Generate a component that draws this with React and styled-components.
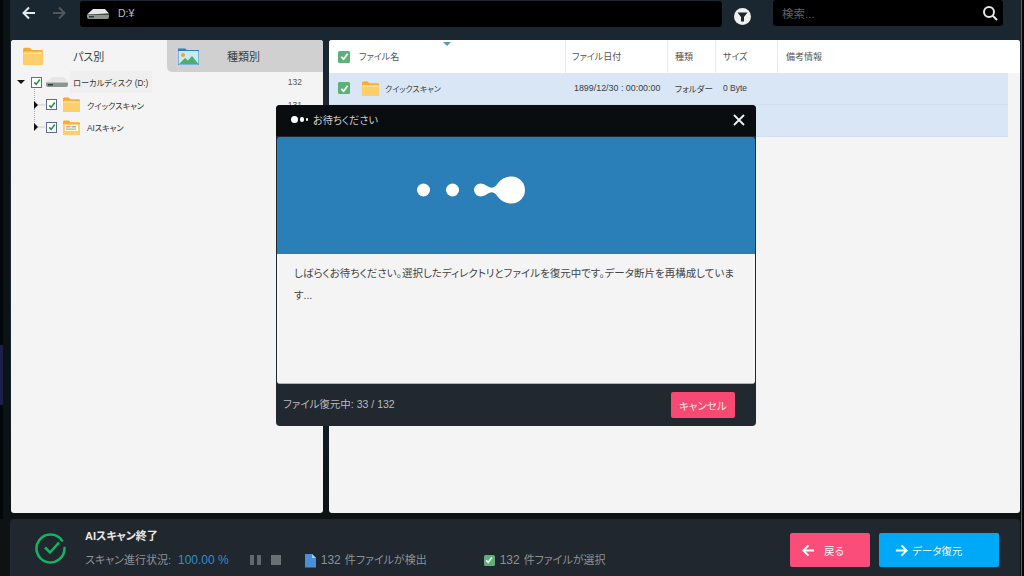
import React from "react";
import styled, { createGlobalStyle } from "styled-components";

const Global = createGlobalStyle`
  html, body { margin: 0; padding: 0; background: #0d1215; }
  * { box-sizing: border-box; }
  #root { width: 1024px; height: 576px; overflow: hidden; }
`;

const Page = styled.div`
  position: relative;
  width: 1024px;
  height: 576px;
  background: linear-gradient(#1a2630 0, #1a2a35 300px, #0d1215 513px);
  font-family: "Liberation Sans", "Noto Sans CJK JP", sans-serif;
  font-feature-settings: "palt";
  display: flex;
  flex-direction: column;
  overflow: hidden;
`;
const TopBar = styled.div`
  height: 40px;
  flex: none;
  display: flex;
  align-items: flex-start;
  padding-left: 20px;
`;
const NavBtn = styled.div`
  width: 18px;
  height: 26px;
  margin-right: 12px;
  display: flex;
  align-items: center;
  justify-content: center;
`;
const PathBox = styled.div`
  width: 642px;
  height: 26px;
  margin-top: 1px;
  background: #000;
  border-radius: 3px;
  color: #b9bec2;
  font-size: 10.5px;
  display: flex;
  align-items: center;
  padding-left: 6px;
  gap: 8px;
`;
const PathText = styled.span`
  margin-bottom: 3px;
`;
const FilterBtn = styled.div`
  width: 51px;
  height: 32px;
  padding-right: 11px;
  display: flex;
  align-items: center;
  justify-content: center;
`;
const SearchBox = styled.div`
  width: 230px;
  height: 26px;
  background: #000;
  border-radius: 3px;
  color: #5e6468;
  font-size: 11.5px;
  display: flex;
  align-items: center;
  justify-content: space-between;
  padding: 0 5px 0 9px;
`;
const Main = styled.div`
  position: relative;
  height: 473px;
  flex: none;
  display: flex;
  gap: 6px;
  padding-left: 11px;
`;
const LeftPanel = styled.div`
  width: 312px;
  background: #f4f4f4;
  border-radius: 3px;
  display: flex;
  flex-direction: column;
  overflow: hidden;
`;
const Tabs = styled.div`
  display: flex;
  height: 32px;
  flex: none;
`;
const Tab = styled.div`
  width: 156px;
  display: flex;
  align-items: center;
  background: ${(p) => (p.$active ? "#f4f4f4" : "#d0d0d0")};
  border-bottom-left-radius: ${(p) => (p.$active ? 0 : "5px")};
  color: #3c3c3c;
  font-size: 11px;
  padding-left: 11px;
`;
const TabLabel = styled.span`
  margin-left: ${(p) => p.$ml}px;
`;
const Tree = styled.div`
  position: relative;
  margin-top: -1px;
`;
const TreeLines = styled.svg`
  position: absolute;
  left: 20px;
  top: 16px;
`;
const TreeRow = styled.div`
  position: relative;
  height: 22.500px;
  display: flex;
  align-items: center;
  padding-left: ${(p) => p.$indent}px;
  color: #333;
  font-size: 8.200px;
  gap: ${(p) => p.$gap}px;
`;
const Caret = styled.span`
  width: 0;
  height: 0;
  border-style: solid;
  flex: none;
  margin-right: 3px;
  ${(p) =>
    p.$open
      ? "border-width: 4px 4px 0 4px; border-color: #111 transparent transparent transparent;"
      : "border-width: 4px 0 4px 4px; border-color: transparent transparent transparent #111;"}
`;
const TreeCheck = styled.span`
  width: 11px;
  height: 11px;
  flex: none;
  border: 1px solid #5e6a92;
  background: #fff;
  display: flex;
  align-items: center;
  justify-content: center;
`;
const DriveLabel = styled.span`
  background: #efefef;
  height: 22px;
  padding: 0 4px 0 3px;
  display: flex;
  align-items: center;
  margin-left: -2px;
`;
const NodeLabel = styled.span`
  margin-left: 1px;
`;
const Count = styled.span`
  margin-left: auto;
  margin-right: 21px;
  font-size: 8.500px;
  color: #555;
`;
const RightPanel = styled.div`
  width: 691px;
  background: #f4f4f4;
  border-radius: 3px;
  display: flex;
  flex-direction: column;
  overflow: hidden;
  position: relative;
`;
const HeaderRow = styled.div`
  height: 33px;
  flex: none;
  background: #fff;
  display: flex;
  align-items: stretch;
  color: #555;
  font-size: 9px;
`;
const HCell = styled.div`
  width: ${(p) => p.$w}px;
  flex: none;
  display: flex;
  align-items: center;
  gap: 9px;
  padding-left: ${(p) => p.$pl}px;
  border-right: ${(p) => (p.$last ? "none" : "1px solid #e2eef6")};
`;
const SortMark = styled.span`
  position: absolute;
  left: 114px;
  top: 2px;
  width: 0;
  height: 0;
  border-style: solid;
  border-width: 4px 4px 0 4px;
  border-color: #5b9ab5 transparent transparent transparent;
`;
const FileRow = styled.div`
  height: 32px;
  flex: none;
  width: 679px;
  padding-bottom: 1px;
  background: #d8e6f6;
  border-bottom: 1px solid #cfdff0;
  display: flex;
  align-items: center;
  color: #3d3d3d;
  font-size: 8.500px;
`;
const FCell = styled.div`
  width: ${(p) => p.$w}px;
  flex: none;
  display: flex;
  align-items: center;
  gap: ${(p) => p.$gap || 6}px;
  padding-left: ${(p) => p.$pl}px;
  font-size: ${(p) => p.$fs || 8.5}px;
  white-space: nowrap;
`;
const GreenCheck = styled.span`
  width: ${(p) => p.$s || 11}px;
  height: ${(p) => p.$s || 11}px;
  flex: none;
  background: #5cb176;
  border-radius: 1.500px;
  display: flex;
  align-items: center;
  justify-content: center;
`;
const Gap = styled.div`
  height: 6px;
  flex: none;
`;
const Bottom = styled.div`
  flex: 1;
  background: #0d1215;
  padding-left: 10px;
  padding-right: 4px;
  display: flex;
`;
const BottomInner = styled.div`
  flex: 1;
  background: #20272e;
  border-radius: 4px 4px 0 0;
  display: flex;
  align-items: stretch;
  padding-left: 25px;
  position: relative;
`;
const StatusIcon = styled.div`
  width: 50px;
  flex: none;
  display: flex;
  align-items: center;
`;
const StatusText = styled.div`
  display: flex;
  flex-direction: column;
  padding-top: 9px;
  gap: 8px;
`;
const StatusTitle = styled.div`
  color: #e8e8e8;
  font-size: 11px;
  font-weight: 700;
  line-height: 16px;
`;
const StatusLine = styled.div`
  display: flex;
  align-items: center;
  color: #8d9296;
  font-size: 11px;
  line-height: 16px;
  white-space: nowrap;
`;
const Percent = styled.span`
  color: #2e8fd0;
  font-size: 12px;
  margin-left: 7px;
`;
const Pause = styled.span`
  display: flex;
  gap: 3px;
  margin-left: 21px;
  & > i { display: block; width: 4px; height: 10px; background: #62676b; }
`;
const Stop = styled.span`
  display: block;
  width: 10px;
  height: 10px;
  background: #6b7074;
  margin-left: 10px;
`;
const Stat = styled.span`
  display: flex;
  align-items: center;
  gap: 5px;
  margin-left: ${(p) => p.$ml}px;
  font-size: 12px;
`;
const StatSmall = styled.span`
  font-size: 11px;
  margin-left: -1px;
`;
const Actions = styled.div`
  margin-left: auto;
  display: flex;
  gap: 9px;
  padding-top: 14px;
  padding-right: 21px;
`;
const ActionBtn = styled.div`
  width: ${(p) => p.$w}px;
  height: 34px;
  background: ${(p) => p.$bg};
  border-radius: 2px;
  color: #f3f3f3;
  font-size: 10.500px;
  display: flex;
  align-items: center;
  padding-left: ${(p) => p.$pl}px;
  gap: ${(p) => p.$gap}px;
`;
const Overlay = styled.div`
  position: absolute;
  left: 276px;
  top: 105px;
  width: 480px;
  height: 321px;
  background: #21282f;
  border-radius: 4px;
  display: flex;
  flex-direction: column;
  overflow: hidden;
`;
const ModalHead = styled.div`
  height: 31px;
  flex: none;
  background: #0a0d10;
  display: flex;
  align-items: center;
  padding: 0 11px 2px 15px;
  color: #cfcfcf;
  font-size: 10.200px;
  gap: 5px;
`;
const Dots = styled.span`
  display: flex;
  align-items: center;
  gap: 1.500px;
`;
const Dot = styled.i`
  display: block;
  width: ${(p) => p.$s}px;
  height: ${(p) => p.$s}px;
  border-radius: 50%;
  background: #fff;
`;
const CloseBtn = styled.span`
  margin-left: auto;
  display: flex;
`;
const Hero = styled.div`
  height: 117px;
  flex: none;
  margin: 1px 1px 0;
  background: #2a7fb8;
  border-radius: 3px 3px 0 0;
  display: flex;
  align-items: center;
  justify-content: center;
  padding: 0 90px 12px 0;
`;
const Body = styled.div`
  height: 130px;
  flex: none;
  margin: 0 1px;
  background: #f4f4f4;
  border-bottom: 1px solid #b5b5b5;
  border-radius: 0 0 3px 3px;
  padding: 8px 14px 0 17px;
  color: #444;
  font-size: 10.500px;
  line-height: 22px;
`;
const ModalFoot = styled.div`
  flex: 1;
  display: flex;
  align-items: center;
  justify-content: space-between;
  padding: 0 21px 4px 7px;
  color: #b8bcbf;
  font-size: 10.500px;
`;
const Cancel = styled.div`
  width: 64px;
  height: 26px;
  margin-top: 4px;
  background: #f74a72;
  border-radius: 2px;
  color: #f4e8ea;
  font-size: 10.500px;
  display: flex;
  align-items: center;
  justify-content: center;
`;
const LeftEdge = styled.div`
  position: absolute;
  left: 0;
  top: 0;
  width: 10px;
  height: 519px;
  background: linear-gradient(90deg, #05080a 0 3px, #0c1317 3px);
`;
const DesktopSliver = styled.div`
  position: absolute;
  left: 0;
  top: 345px;
  width: 3px;
  height: 60px;
  background: #1c1f4a;
`;
const RightEdge = styled.div`
  position: absolute;
  left: 1021px;
  top: 0;
  width: 3px;
  height: 576px;
  background: linear-gradient(90deg, #5c6368 0 1px, #05080a 1px);
`;

const Folder = ({ w = 20, h = 18, ai }) => (
  <svg width={w} height={h} viewBox="0 0 20 18" style={{ flex: "none" }}>
    <path d="M1 3a1.500 1.500 0 0 1 1.500-1.500H7L9 3.500h8.500A1.500 1.500 0 0 1 19 5v10.500a1.500 1.500 0 0 1-1.500 1.500h-15A1.500 1.500 0 0 1 1 15.500z" fill="#fba928" />
    <rect x="1" y="5" width="18" height="12" rx="1.500" fill="#fdcf6b" />
    {ai ? (
      <g>
        <rect x="3" y="6.500" width="14" height="6" fill="#fff" />
        <rect x="4" y="7.500" width="5" height="1.500" fill="#e58bb0" />
        <rect x="10" y="7.500" width="5" height="1.500" fill="#8aa7e0" />
        <rect x="4" y="10" width="11" height="1.500" fill="#a5c98c" />
      </g>
    ) : (
      <rect x="2" y="6" width="16" height="1" fill="#ffe9b8" />
    )}
  </svg>
);
const PhotoFolder = () => (
  <svg width="21" height="18" viewBox="0 0 21 18" style={{ flex: "none" }}>
    <path d="M0 1.500h7l2 1.500h12v15H0z" fill="#2f7fc0" />
    <rect x="0.500" y="4" width="20" height="13.500" fill="#c9e9f5" />
    <circle cx="5" cy="8" r="2" fill="#f5a623" />
    <path d="M1 17l6-6 3 2.500 4-4.500 6.500 8z" fill="#4fae6a" />
  </svg>
);
const Drive = ({ w = 24, h = 13 }) => (
  <svg width={w} height={h} viewBox="0 0 24 13" style={{ flex: "none" }}>
    <path d="M1 6.500L7 1h12l4 4.500z" fill="#e6e6e6" />
    <path d="M1 6.500h22V9a2 2 0 0 1-2 2H3a2 2 0 0 1-2-2z" fill="#8e9490" />
    <rect x="3" y="8" width="5" height="1.500" fill="#2e3a34" />
  </svg>
);
const Tick = ({ c = "#fff", s = 8 }) => (
  <svg width={s} height={s} viewBox="0 0 10 10">
    <path d="M1.500 5.500L4 8l4.500-6" fill="none" stroke={c} strokeWidth="2" />
  </svg>
);
const Arrow = ({ dir = "left", c = "#fff", s = 16, w = 2 }) => (
  <svg width={s} height={s} viewBox="0 0 16 16">
    {dir === "left" ? (
      <path d="M14 8H2.500M8 2.500L2.500 8 8 13.500" fill="none" stroke={c} strokeWidth={w} />
    ) : (
      <path d="M2 8h11.500M8 2.500L13.500 8 8 13.500" fill="none" stroke={c} strokeWidth={w} />
    )}
  </svg>
);

export default function App() {
  return (
    <Page>
      <Global />
      <TopBar>
        <NavBtn><Arrow c="#e8e8e8" /></NavBtn>
        <NavBtn><Arrow dir="right" c="#4f575c" /></NavBtn>
        <PathBox>
          <Drive />
          <PathText>D:¥</PathText>
        </PathBox>
        <FilterBtn>
          <svg width="17" height="17" viewBox="0 0 17 17">
            <circle cx="8.500" cy="8.500" r="8.500" fill="#f0f0f0" />
            <path d="M3.500 4.500h10L10 9v4.500H7V9z" fill="#20272c" />
          </svg>
        </FilterBtn>
        <SearchBox>
          <span>検索...</span>
          <svg width="16" height="16" viewBox="0 0 16 16">
            <circle cx="7" cy="7" r="5" fill="none" stroke="#e6e6e6" strokeWidth="2" />
            <path d="M10.500 10.500L15 15" stroke="#e6e6e6" strokeWidth="2" />
          </svg>
        </SearchBox>
      </TopBar>
      <LeftEdge />
      <DesktopSliver />
      <RightEdge />
      <Main>
        <LeftPanel>
          <Tabs>
            <Tab $active><Folder w={22} h={20} /><TabLabel $ml={29}>パス別</TabLabel></Tab>
            <Tab><PhotoFolder /><TabLabel $ml={28}>種類別</TabLabel></Tab>
          </Tabs>
          <Tree>
            <TreeLines width="20" height="46" viewBox="0 0 20 46">
              <path d="M3.500 2V40M3.500 18H14M3.500 40H14" stroke="#a8a8a8" strokeDasharray="1 1" fill="none" />
            </TreeLines>
            <TreeRow $indent={6} $gap={3}>
              <Caret $open />
              <TreeCheck><Tick c="#1e9a3c" /></TreeCheck>
              <Drive w={24} h={13} />
              <DriveLabel>ローカルディスク (D:)</DriveLabel>
              <Count>132</Count>
            </TreeRow>
            <TreeRow $indent={23} $gap={5}>
              <Caret />
              <TreeCheck><Tick c="#1e9a3c" /></TreeCheck>
              <Folder w={19} h={17} />
              <NodeLabel>クイックスキャン</NodeLabel>
              <Count>131</Count>
            </TreeRow>
            <TreeRow $indent={23} $gap={5}>
              <Caret />
              <TreeCheck><Tick c="#1e9a3c" /></TreeCheck>
              <Folder w={19} h={17} ai />
              <NodeLabel>AIスキャン</NodeLabel>
            </TreeRow>
          </Tree>
        </LeftPanel>
        <RightPanel>
          <SortMark />
          <HeaderRow>
            <HCell $w={237} $pl={9}><GreenCheck $s={12}><Tick s={9} /></GreenCheck>ファイル名</HCell>
            <HCell $w={102} $pl={6}>ファイル日付</HCell>
            <HCell $w={48} $pl={7}>種類</HCell>
            <HCell $w={62} $pl={7}>サイズ</HCell>
            <HCell $w={200} $pl={8} $last>備考情報</HCell>
          </HeaderRow>
          <FileRow>
            <FCell $w={237} $pl={9} $gap={5} $fs={8}>
              <GreenCheck $s={12}><Tick s={9} /></GreenCheck>
              <span style={{ width: 1 }} />
              <Folder w={19} h={19} />
              クイックスキャン
            </FCell>
            <FCell $w={102} $pl={8} $fs={8.9}>1899/12/30 : 00:00:00</FCell>
            <FCell $w={48} $pl={7}>フォルダー</FCell>
            <FCell $w={47} $pl={7}>0 Byte</FCell>
          </FileRow>
          <FileRow />
        </RightPanel>
      </Main>
      <Gap />
      <Bottom>
        <BottomInner>
          <StatusIcon>
            <svg width="32" height="32" viewBox="0 0 32 32">
              <path d="M27 8.500A14 14 0 1 0 29.500 16" fill="none" stroke="#0fb763" strokeWidth="2.500" strokeLinecap="round" />
              <path d="M10 15.500l5 5 9-10" fill="none" stroke="#0fb763" strokeWidth="2.500" />
            </svg>
          </StatusIcon>
          <StatusText>
            <StatusTitle>AIスキャン終了</StatusTitle>
            <StatusLine>
              スキャン進行状況:<Percent>100.00 %</Percent>
              <Pause><i /><i /></Pause>
              <Stop />
              <Stat $ml={24}>
                <svg width="11" height="15" viewBox="0 0 11 15">
                  <path d="M0 1h7l4 4v9.500H0z" fill="#4a90d9" />
                  <path d="M7 1l4 4H7z" fill="#a8cdf2" />
                </svg>
                132 <StatSmall>件ファイルが検出</StatSmall>
              </Stat>
              <Stat $ml={57}>
                <GreenCheck $s={11}><Tick s={8} /></GreenCheck>
                132 <StatSmall>件ファイルが選択</StatSmall>
              </Stat>
            </StatusLine>
          </StatusText>
          <Actions>
            <ActionBtn $w={80} $pl={11} $bg="#fb4d7a" $gap={8}><Arrow s={15} />戻る</ActionBtn>
            <ActionBtn $w={120} $pl={15} $bg="#00a9f7" $gap={3}><Arrow dir="right" s={15} />データ復元</ActionBtn>
          </Actions>
        </BottomInner>
      </Bottom>
      <Overlay>
        <ModalHead>
          <Dots><Dot $s={7} /><Dot $s={4.500} /><Dot $s={2.500} /></Dots>
          <span>お待ちください</span>
          <CloseBtn>
            <svg width="12" height="12" viewBox="0 0 12 12">
              <path d="M1 1l10 10M11 1L1 11" stroke="#f0f0f0" strokeWidth="1.800" />
            </svg>
          </CloseBtn>
        </ModalHead>
        <Hero>
          <svg width="108" height="28" viewBox="0 0 108 28">
            <circle cx="6.500" cy="14" r="6.500" fill="#fff" />
            <circle cx="35.500" cy="14" r="6.500" fill="#fff" />
            <path d="M63.500 7.500C67.500 7.500 70 10.500 73.500 11.500C77 12.500 79 10 81 7C84 3 89 .5 94.500 .5a13.500 13.500 0 1 1 0 27C89 27.500 84 25 81 21C79 18 77 15.500 73.500 16.500C70 17.500 67.500 20.500 63.500 20.500a6.500 6.500 0 1 1 0-13z" fill="#fff" />
          </svg>
        </Hero>
        <Body>
          しばらくお待ちください。選択したディレクトリとファイルを復元中です。データ断片を再構成しています...
        </Body>
        <ModalFoot>
          <span>ファイル復元中: 33 / 132</span>
          <Cancel>キャンセル</Cancel>
        </ModalFoot>
      </Overlay>
    </Page>
  );
}
